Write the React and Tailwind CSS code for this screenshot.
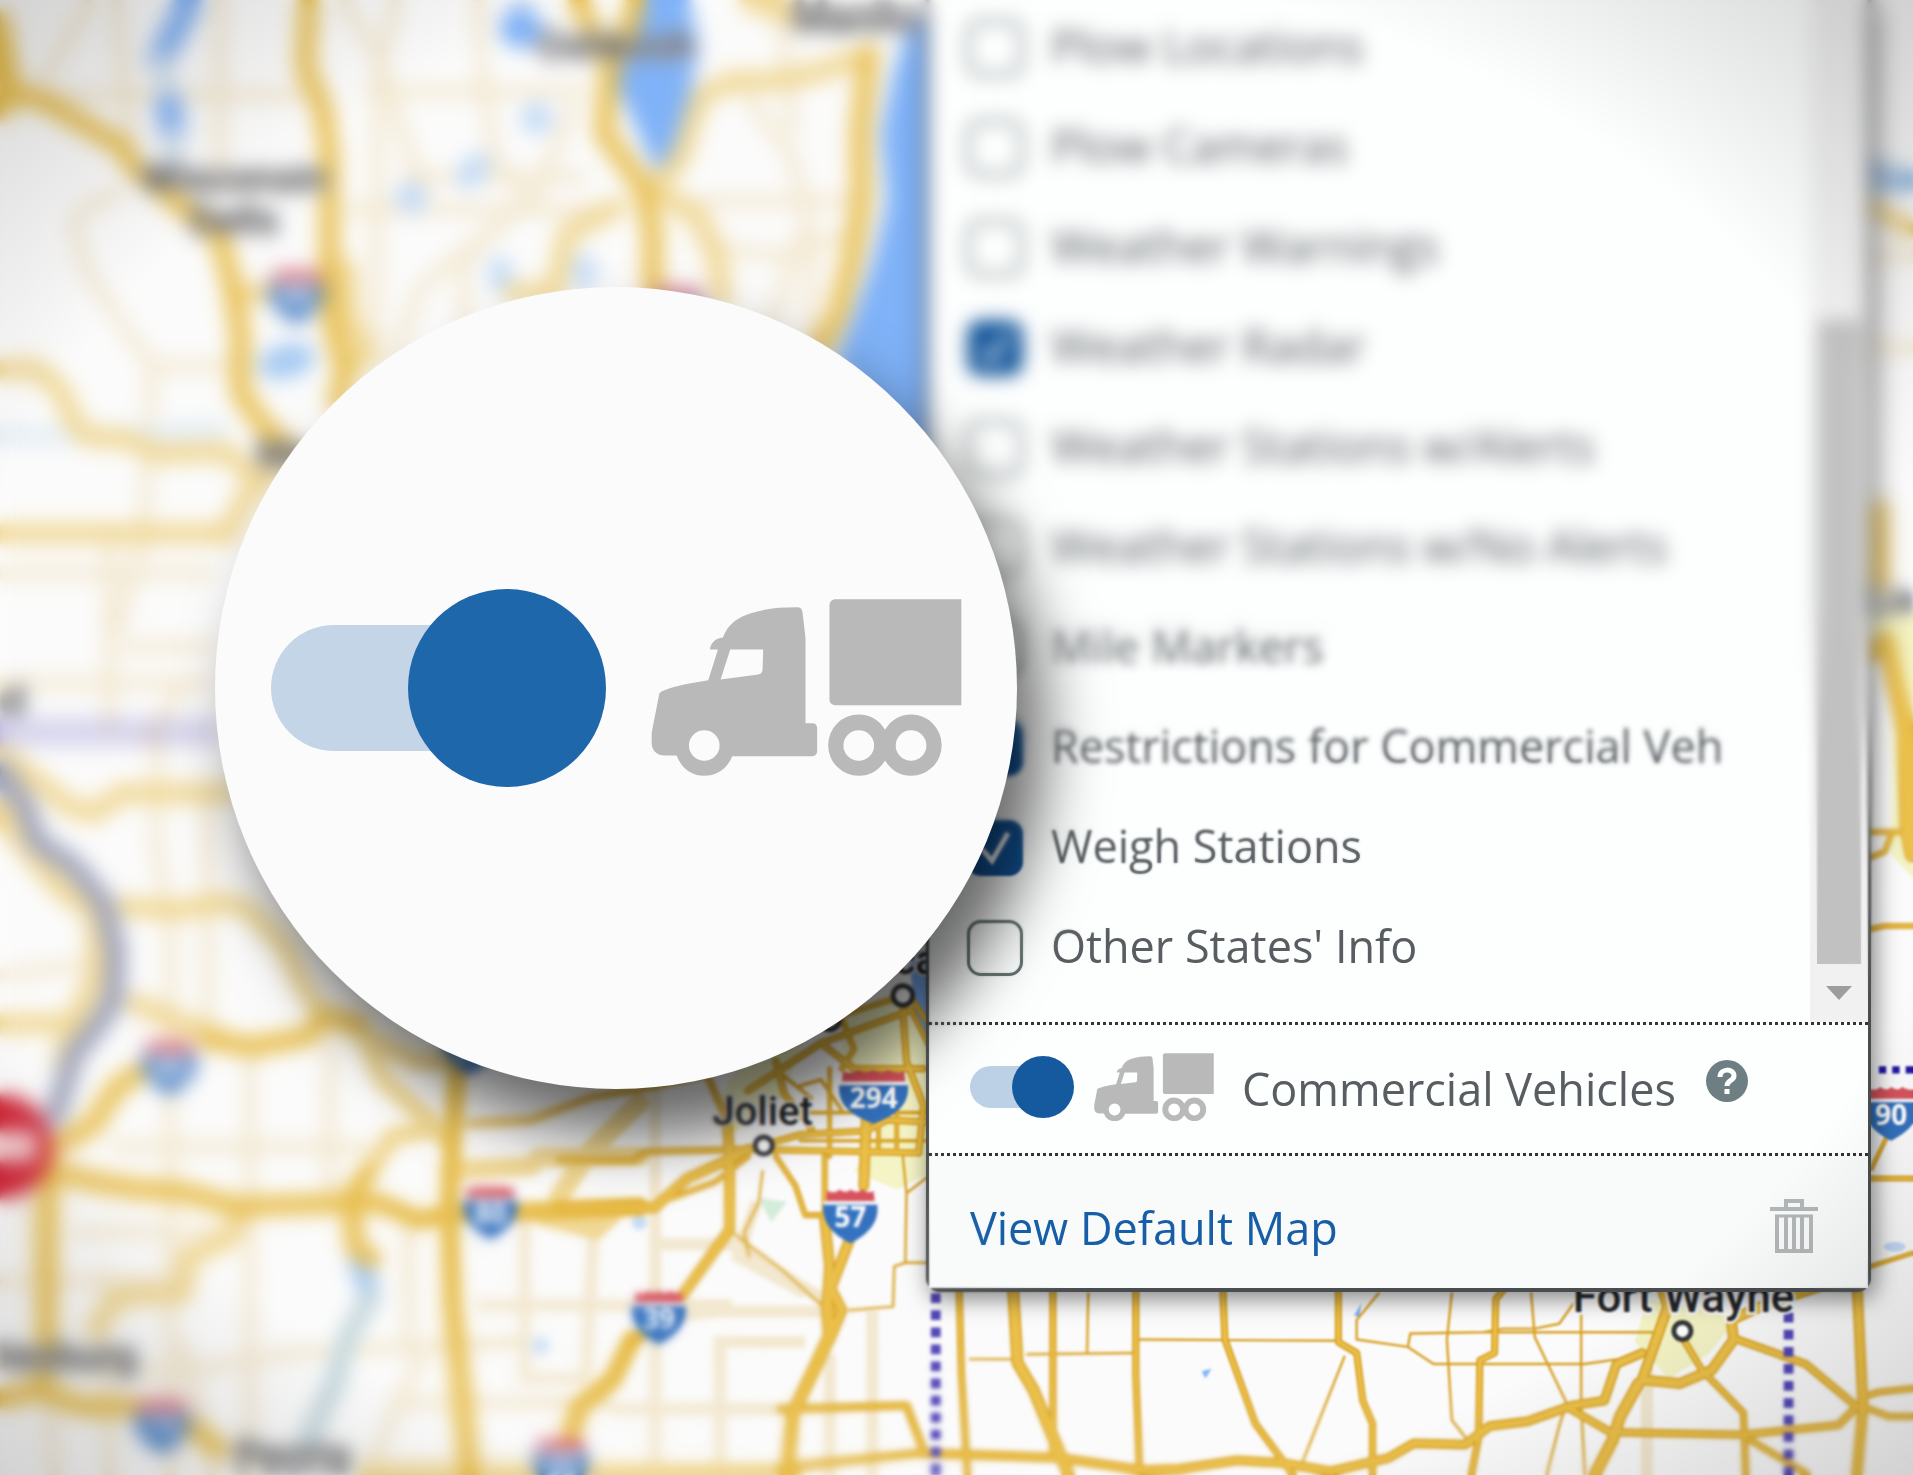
import React from "react";

const faintRoads = [
  "M75 0 L30 75", "M95 0 L108 130", "M180 0 V160", "M20 78 H250", "M280 0 L312 50 L330 110 L350 160",
  "M325 0 L310 60 L308 300", "M392 0 L396 70 L406 130 L430 160", "M300 75 H480", "M330 145 H480", "M285 172 H500",
  "M430 165 L380 215 L382 310", "M470 85 L440 160 L345 235 L320 300", "M60 180 L70 220 L110 280 L125 300 L118 440 L95 520",
  "M60 180 L78 165 L100 160", "M125 300 H190", "M555 165 H700", "M610 75 L650 130 L662 180 L655 200 L620 300", "M640 0 L650 110",
  "M665 190 V290", "M570 200 L640 210 L700 190", "M0 470 H176", "M90 440 V600", "M100 530 H176", "M0 800 L75 790", "M130 590 L128 690 L140 760 V1209",
  "M170 640 V860", "M0 560 H176", "M150 560 L120 610", "M205 860 V1209", "M270 850 V980", "M90 940 H300", "M60 1010 H180", "M85 1040 L90 1209",
  "M25 980 L45 1209", "M150 1100 L175 1209", "M60 1120 L140 1125 L250 1108 L430 1100", "M0 1050 H140", "M335 990 V1110", "M430 985 V1130 H480",
  "M487 1000 L480 1130", "M390 1070 H600", "M320 1150 H500", "M350 1100 L300 1209", "M537 870 V1209", "M540 1080 L590 1075 H690",
  "M590 1209 V1100 H660", "M715 1075 V1209", "M540 1020 H600 L680 1068", "M500 1155 H650", "M680 1110 V1209", "M620 985 L605 1030 L660 1060",
  "M1530 210 H1568", "M1530 285 H1568", "M1350 1120 V1209",
];

const midRoads = [
  "M0 303 L30 302 L50 320 L60 345 L72 358 L105 360 L130 372 L185 370 L212 395",
  "M713 44 L669 60 L636 66 L601 66 L574 79 L557 131 L541 148", "M533 153 L574 180 L587 208 L592 245",
  "M505 170 L465 191 L454 240 L420 240", "M612 0 L645 12", "M0 437 H180", "M0 617 L57 661 L77 667 L100 650 L186 650",
  "M0 661 L20 694 L50 729 L77 748 L80 798 L63 833 L50 870", "M100 743 L140 746 L187 740 L204 746 L234 776 L247 806 L264 831",
  "M0 839 L62 839 M110 822 L150 839 L180 850", "M197 995 L187 1016 L154 1030 L150 1060 L97 1063 L77 1090",
  "M368 959 L435 956 L441 949 L524 948", "M524 904 L485 942 L458 981", "M445 997 L488 1008 L502 995",
  "M294 839 L314 885 L348 915 L365 934", "M301 962 L321 932 L351 926", "M200 242 L232 236", "M284 840 L340 870 H380",
  "M240 369 L200 410 L185 440", "M283 305 L300 290 L286 260 L284 220", "M300 1207 H650",
];

const majorRoads = [
  "M0 16 L10 75 L40 85 L100 120 L112 140 L150 170 L180 195 L190 232 L197 273 L197 322 L217 350 L240 369", "M0 92 L10 75",
  "M253 0 L250 55 L265 90 L270 130 L270 230 L272 265 L283 305 L276 330", "M473 0 L500 55 L495 109 L527 153 L535 191 L535 240",
  "M522 0 L510 40 L500 55", "M712 44 L705 109 L706 164 L699 208 L686 260 L672 285",
  "M170 852 L207 858 L251 850 L267 833 L294 839", "M40 948 L38 1085 L35 1139", "M50 937 L77 921 L94 893 L112 880",
  "M50 962 L84 970 L117 975 L150 977 L194 989 L284 986 L311 986 L344 1000 L368 995 L435 993 L524 989",
  "M284 986 L301 962", "M288 989 L291 1022 L305 1032", "M375 870 L371 934 L368 989 L371 1071 L378 1139 L385 1209",
  "M468 1175 L475 1153 L502 1131 L518 1098", "M0 1147 L33 1139 L67 1153 L110 1153 L160 1172 L180 1188",
];

const nearRoads = [
  [6, "M385 921 L435 918 L485 899 L524 893 L580 880"], [6, "M459 951 L519 951 L529 944 L613 942 L753 945"],
  [9, "M459 990 L536 990 L563 966 L596 951 L613 942"], [5, "M550 982 L586 969 L613 948"],
  [9, "M596 918 L598 948 L598 1008 L559 1062 L523 1098"], [6, "M579 880 L593 912"], [5, "M636 948 L652 972 L660 996 H676"],
  [5, "M676 948 V999"], [9, "M676 999 L680 1038 L678 1068"], [11, "M678 1068 L680 1095 L666 1125 L650 1158 L645 1209"],
  [9, "M710 918 L708 972 M696 1017 L681 1056 L690 1074 L680 1098"], [7, "M640 1155 L743 1152 L757 1189"], [7, "M640 1203 L754 1191"],
  [6, "M613 894 L673 855 L747 828"], [5, "M640 860 L690 832 L745 815 L762 840"], [6, "M673 855 L700 876 H757"],
  [6, "M740 828 L743 870 L757 906 L753 945"], [5, "M747 828 L764 862 V945"], [6, "M636 870 L643 897 L665 925"],
  [6, "M613 942 L656 930 L710 927 L727 918 L764 920"], [4, "M680 876 V948"], [3, "M656 890 L673 885 L690 910 M640 880 L665 900"],
  [5, "M690 835 L700 860 L690 876"], [4, "M720 915 V945 M735 900 V945"], [3, "M656 912 H764 M656 935 H764"],
  [2, "M740 948 L743 978 L742 1035 L733 1038 L732 1071 L696 1074 M742 1035 H768 M743 978 L760 965"], [2, "M625 960 L622 985 L610 1010 L614 1030"],
  [2, "M600 1010 L640 1040 L676 1072"],
  [6, "M786 1050 L788 1126 L793 1209"], [10, "M830 1050 L834 1117 L847 1139 L876 1209"], [6, "M863 1050 L863 1191"],
  [2, "M892 1060 L891 1109 M842 1110 L930 1109 M795 1114 H830"], [6, "M931 1050 L931 1126 L934 1205"],
  [6, "M1002 1050 L1004 1098 L1029 1167 L1060 1209"], [2, "M931 1098 L1097 1099"],
  [6, "M1097 1050 L1097 1100 L1112 1109 L1117 1148 L1125 1167 L1125 1209"],
  [2, "M1130 1060 L1112 1082 L1112 1098 L1154 1104 L1175 1118 L1299 1118 L1341 1112"], [2, "M1102 1112 L1065 1205"],
  [2, "M1154 1104 L1156 1093 L1216 1092 L1232 1089 L1258 1089 L1278 1085 L1290 1068 M1216 1092 H1356"],
  [6, "M1234 1055 L1226 1065 L1225 1109 L1213 1115 L1212 1178 L1206 1209"], [2, "M1190 1060 L1186 1098 L1190 1164 L1201 1178"],
  [2, "M1255 1060 L1258 1096 L1284 1150 L1278 1169 L1268 1208"], [2, "M1296 1075 L1296 1153 L1299 1208"],
  [8, "M754 1191 L868 1195 L936 1205 L967 1204 L1014 1197 L1050 1199 L1091 1206 L1138 1195 L1159 1183 L1201 1184 L1221 1169 L1252 1165 L1289 1152 L1315 1148 L1325 1118 L1346 1109"],
  [9, "M1362 1055 L1367 1071 L1346 1131 L1377 1134 L1403 1123 L1421 1098 L1419 1082 L1445 1070 L1490 1055"],
  [10, "M1343 1134 L1328 1161 L1322 1180 L1307 1209"], [7, "M1284 1153 L1320 1174 L1429 1176 L1507 1168 L1522 1153 L1480 1118 L1424 1098"],
  [6, "M1380 1098 L1395 1123 L1429 1158 L1431 1209 M1434 1180 L1481 1208"], [9, "M1522 1050 L1527 1153 L1522 1209"],
  [6, "M1527 1145 L1540 1141 L1568 1138 M1527 1153 L1548 1161 L1568 1161"], [4, "M1533 1038 L1568 1027"],
  [8, "M1528 165 L1568 190"], [12, "M1541 416 V480"], [14, "M1528 540 L1546 524 L1562 601 L1564 678 L1568 700"],
  [5, "M1530 682 H1568 M1530 704 L1545 698 L1550 684 M1530 762 L1545 759 H1568 M1530 966 H1568"], [4, "M1534 958 L1546 933"],
];

const shields = [
  [243, 242, "90"], [139, 874, "80"], [402, 993, "80"], [540, 1079, "39"], [133, 1168, "74"], [460, 1200, "55"],
  [555, 257, "43"], [385, 858, "39"], [697, 996, "57"], [1550, 912, "90"],
];

function Shield({ x, y, label, half = 22 }) {
  const w = half;
  return (
    <g transform={`translate(${x} ${y})`}>
      <path d={`M${-w + 3} -20 q7 3 ${w * 0.45} -1 q6 4 ${w - 3 - w * 0.45} 0 q6 4 ${w - 3 - w * 0.45} 0 q7 4 ${w * 0.45} 1 l1 9 h${-2 * w + 4} z`} fill="#d8535d" />
      <path d={`M${-w} -9 H${w} C${w + 2} 6 ${w - 8} 16 0 23 C${-w + 8} 16 ${-w - 2} 6 ${-w} -9 Z`} fill="#3572bf" />
      <path d={`M${-w} -10 H${w}`} stroke="#f4f6fa" strokeWidth="3" />
      <text x="0" y="10" textAnchor="middle" className="font-['Open_Sans',sans-serif] text-[23px] font-bold" fill="#fff">{label}</text>
    </g>
  );
}

function Town({ x, y, anchor = "middle", children }) {
  return (
    <text x={x} y={y} textAnchor={anchor} stroke="#fff" strokeWidth="3" paintOrder="stroke" fill="#1f2124" className="text-[33px] font-medium">
      {children}
    </text>
  );
}

function RoadMap() {
  return (
    <svg className="absolute inset-0 h-full w-full font-['Roboto',sans-serif]" viewBox="0 0 1568 1209" preserveAspectRatio="xMidYMid slice" aria-label="Road map" role="img">
      <rect width="1568" height="1209" fill="#fbfbfb" />
      <g fill="#f4f4c6">
        <path d="M690 830 L765 800 V960 L735 975 L700 960 L720 930 L690 905 Z" />
        <path d="M620 850 L660 850 L640 900 L600 930 L590 900 Z" />
        <path d="M1350 1065 L1425 1080 L1400 1110 L1368 1130 L1340 1100 Z" />
        <path d="M1530 500 H1568 V720 L1550 700 L1552 560 Z" />
      </g>
      <path d="M622 982 L645 985 L632 1002 Z" fill="#d5ecd9" />
      <g fill="none" stroke="#f3e8d0" strokeWidth="10">
        {faintRoads.map((d) => <path key={d} d={d} />)}
      </g>
      <g fill="#7fb2f8">
        <path d="M765 8 L742 30 L732 60 L722 109 L727 165 L715 215 L698 262 L685 295 L765 420 Z" />
        <path d="M525 0 L565 0 L573 40 L564 85 L554 115 L541 148 L526 115 L508 75 L500 50 Z" />
        <path d="M745 780 H765 V860 L750 835 Z" />
        <circle cx="427" cy="23" r="17" />
        <path d="M985 1124 L993 1122 L988 1130 Z M1110 1078 L1116 1068 L1114 1080 Z" />
      </g>
      <g fill="#c3dbf7">
        <circle cx="440" cy="97" r="13" /><ellipse cx="388" cy="140" rx="11" ry="17" transform="rotate(40 388 140)" />
        <circle cx="337" cy="162" r="13" /><ellipse cx="479" cy="223" rx="10" ry="15" /><ellipse cx="410" cy="225" rx="10" ry="15" />
        <ellipse cx="235" cy="296" rx="24" ry="14" transform="rotate(-15 235 296)" fill="#a5c9f2" />
        <circle cx="524" cy="1002" r="6" /><circle cx="443" cy="1103" r="7" /><ellipse cx="1553" cy="1022" rx="9" ry="4" />
      </g>
      <g fill="none" strokeLinecap="round" strokeLinejoin="round">
        <path d="M158 -5 L145 22 L131 48 M138 82 L141 108" stroke="#86b4f5" strokeWidth="22" />
        <path d="M131 48 L138 75 M141 110 L143 140" stroke="#cfdfee" strokeWidth="14" />
        <path d="M294 1033 L304 1062" stroke="#9fc5f2" strokeWidth="17" />
        <path d="M304 1062 L284 1098 L274 1135 L252 1180" stroke="#c3d6dc" strokeWidth="16" />
        <path d="M0 357 H90 L180 352" stroke="#e6eef5" strokeWidth="16" />
        <g stroke="#f0d793" strokeWidth="16">{midRoads.map((d) => <path key={d} d={d} />)}</g>
        <g stroke="#e8bf50" strokeWidth="16">{majorRoads.map((d) => <path key={d} d={d} />)}</g>
        <g stroke="#d8a225">{nearRoads.map(([w, d]) => <path key={d} d={d} strokeWidth={w} />)}</g>
        <g stroke="#ebc04a">{nearRoads.filter(([w]) => w > 3).map(([w, d]) => <path key={d} d={d} strokeWidth={w - 3} />)}</g>
        <path d="M0 630 L20 660 L30 690 L60 710 L85 740 L95 780 L93 820 L80 840 L60 865 L45 915" stroke="#b7c1e6" strokeWidth="19" />
        <path d="M0 630 L20 660 L30 690 L60 710 L85 740 L95 780 L93 820 L80 840 L60 865 L45 915" stroke="#85807e" strokeWidth="14" strokeLinecap="butt" strokeDasharray="6 6" />
      </g>
      <g fill="none" stroke="#5247b8">
        <path d="M0 600 H180" strokeWidth="24" strokeDasharray="7 7" strokeOpacity="0.42" />
        <path d="M767 1060 V1209 M1466 1076 V1209" strokeWidth="8" strokeDasharray="8 6" />
        <path d="M1540 877 H1568" strokeWidth="6" strokeDasharray="6 5" stroke="#2416a8" />
      </g>
      <Town x={505} y={48}>Oshkosh</Town>
      <Town x={650} y={26} anchor="start">Manito</Town>
      <Town x={192} y={157}>Wisconsin</Town>
      <Town x={192} y={192}>Dells</Town>
      <Town x={274} y={384}>Madison</Town>
      <Town x={2} y={585} anchor="start">d</Town>
      <Town x={2} y={1123} anchor="start">lesburg</Town>
      <Town x={240} y={1204}>Peoria</Town>
      <Town x={625} y={922}>Joliet</Town>
      <Town x={768} y={798} anchor="end">Chica</Town>
      <text x="1380" y="1075" textAnchor="middle" stroke="#fff" strokeWidth="4" paintOrder="stroke" fill="#26282b" className="text-[36px] font-medium">Fort Wayne</text>
      <Town x={1530} y={502} anchor="start">La</Town>
      <text x="1530" y="156" className="text-[32px] font-medium" fill="#2f78c4">Sa</text>
      {shields.map(([x, y, label]) => <Shield key={`${x}-${y}`} x={x} y={y} label={label} />)}
      <Shield x={716} y={898} label="294" half={28} />
      <g fill="#fff" stroke="#36383b" strokeWidth="4">
        <circle cx="740" cy="816" r="8" /><circle cx="680" cy="836" r="8" /><circle cx="626" cy="939" r="7" /><circle cx="1379" cy="1091" r="7" />
      </g>
      <circle cx="0" cy="940" r="43" fill="#d1283a" />
      <rect x="-30" y="927" width="60" height="25" fill="#f3cfd2" />
    </svg>
  );
}

function Truck({ className }) {
  return (
    <svg className={className} viewBox="30 118 934 532" fill="#b9b9b9" aria-hidden="true">
      <path fillRule="evenodd" d="M55 402 C58 396 64 394 72 391 C110 377 155 370 202 362 L231 270 H207 C209 250 224 236 246 234 C262 190 295 172 330 161 C375 146 420 143 468 143 C479 143 484 149 485 158 L494 235 V491 H514 C524 491 529 497 529 506 V573 C529 583 524 590 514 590 H274 C258 628 228 649 190 649 C152 649 122 628 107 588 H70 C46 588 32 572 32 550 V520 Z M268 270 L239 360 L352 345 C361 343 365 338 365 330 L367 270 Z M190 512 A46 46 0 1 0 190 604 A46 46 0 1 0 190 512 Z" />
      <path d="M585 119 H962 V437 H585 C573 437 566 430 566 419 V138 C566 127 573 119 585 119 Z" />
      <path fillRule="evenodd" d="M733 511 C716 482 688 465 654 465 A92 92 0 1 0 654 649 C688 649 716 632 733 603 C750 632 778 649 811 649 A92 92 0 1 0 811 465 C778 465 750 482 733 511 Z M654 512 A46 46 0 1 1 654 604 A46 46 0 1 1 654 512 Z M811 512 A46 46 0 1 1 811 604 A46 46 0 1 1 811 512 Z" />
    </svg>
  );
}

const layers = [
  { name: "Plow Locations", on: false },
  { name: "Plow Cameras", on: false },
  { name: "Weather Warnings", on: false },
  { name: "Weather Radar", on: true },
  { name: "Weather Stations w/Alerts", on: false },
  { name: "Weather Stations w/No Alerts", on: false },
  { name: "Mile Markers", on: false },
  { name: "Restrictions for Commercial Veh", on: true },
  { name: "Weigh Stations", on: true },
  { name: "Other States' Info", on: false },
];

function LayerRow({ name, on }) {
  return (
    <label className="flex h-[100px] items-center gap-[28px] pb-1 whitespace-nowrap">
      <span className="grid size-[56px] shrink-0 place-items-center">
        <input type="checkbox" defaultChecked={on} className="peer col-start-1 row-start-1 size-full appearance-none rounded-[14px] border-[3px] border-[#5d6b6b] bg-transparent checked:border-[#12559a] checked:bg-[#12559a]" />
        <svg className="pointer-events-none invisible col-start-1 row-start-1 size-[44px] peer-checked:visible" viewBox="0 0 44 44" fill="none" stroke="#fff" strokeWidth="5" aria-hidden="true">
          <path d="M9 23 L19 35 L35 7" />
        </svg>
      </span>
      <span className="pb-1">{name}</span>
    </label>
  );
}

export default function App() {
  return (
    <main className="relative min-h-screen overflow-hidden bg-[#fbfbfb] font-['Open_Sans','Noto_Sans',sans-serif] text-[45px] leading-[60px] text-[#575d61]">
      <RoadMap />
      <div className="pointer-events-none absolute inset-0 backdrop-blur-[1px]" />
      <div className="pointer-events-none absolute inset-0 backdrop-blur-[5px] [mask-image:radial-gradient(ellipse_32%_21%_at_75%_76%,transparent_165%,black_230%)]" />

      <section aria-label="Map layers" className="relative ml-[48.4%] w-[49.4%] rounded-b-[14px] border-x-[3px] border-b-[4px] border-[#4a4d4f] bg-[#fdfefe] shadow-[4px_6px_24px_rgba(0,0,0,0.5)]">
        <div className="flex">
          <div className="min-w-0 flex-1 overflow-hidden pb-[22px] pl-[38px]">
            {layers.map((l) => <LayerRow key={l.name} {...l} />)}
          </div>
          <div className="flex w-[58px] shrink-0 flex-col items-center bg-[#f1f1f1] pt-[320px]">
            <div className="w-[44px] flex-1 bg-[#c1c1c1]" />
            <button type="button" aria-label="Scroll down" className="flex h-[58px] w-full items-center justify-center">
              <svg width="26" height="14" viewBox="0 0 26 14" fill="#9d9d9d" aria-hidden="true"><path d="M0 0 H26 L13 14 Z" /></svg>
            </button>
          </div>
        </div>

        <div className="flex h-[134px] items-center border-y-[3px] border-dotted border-[#333] pb-1 pl-[41px]">
          <button type="button" role="switch" aria-checked="true" aria-label="Commercial Vehicles" className="flex h-[42px] w-[104px] items-center justify-end rounded-full bg-linear-to-r from-[#bdd1e6] from-75% to-transparent to-75%">
            <span className="size-[62px] shrink-0 rounded-full bg-[#155a9f]" />
          </button>
          <Truck className="ml-[20px] w-[120px]" />
          <span className="ml-[28px] pt-1 whitespace-nowrap">Commercial Vehicles</span>
          <button type="button" aria-label="Help" className="mb-[12px] ml-[30px] grid size-[42px] place-items-center rounded-full bg-[#6d7f82]">
            <svg className="size-[32px]" viewBox="0 0 32 32" fill="none" stroke="#fff" strokeWidth="5" aria-hidden="true">
              <path d="M9 12 C9 3 23 3 23 11 C23 16 16 15 16 21" /><path d="M16 24 V29" />
            </svg>
          </button>
        </div>

        <div className="flex h-[132px] items-center justify-between bg-[#f9fbfb] pt-2 pr-[50px] pl-[41px]">
          <a href="#default" className="pt-1 text-[#175ea6]">View Default Map</a>
          <button type="button" aria-label="Delete">
            <svg width="48" height="54" viewBox="0 0 48 54" fill="none" stroke="#b4b7b8" strokeWidth="4" aria-hidden="true">
              <path d="M0 10 H48 M16 9 V2 H32 V9" /><path d="M7 16 V52 H41 V16 M16 16 V52 M24 16 V52 M32 16 V52" /><path d="M5 17 H43" strokeWidth="3" />
            </svg>
          </button>
        </div>
      </section>

      <div className="pointer-events-none absolute inset-0 backdrop-blur-[1px] [mask-image:radial-gradient(ellipse_32%_21%_at_75%_76%,transparent_80%,black_100%)]" />
      <div className="pointer-events-none absolute inset-0 backdrop-blur-[2px] [mask-image:radial-gradient(ellipse_32%_21%_at_75%_76%,transparent_105%,black_125%)]" />
      <div className="pointer-events-none absolute inset-0 backdrop-blur-[4px] [mask-image:radial-gradient(ellipse_32%_21%_at_75%_76%,transparent_130%,black_150%)]" />
      <div className="pointer-events-none absolute inset-0 backdrop-blur-[8px] [mask-image:radial-gradient(ellipse_32%_21%_at_75%_76%,transparent_150%,black_180%)]" />
      <div className="pointer-events-none absolute inset-0 bg-[radial-gradient(ellipse_75%_75%_at_50%_50%,transparent_70%,rgba(0,0,0,0.2)_100%)]" />

      <div className="absolute top-[287px] left-[215px] flex size-[802px] items-center justify-center gap-[45px] rounded-full bg-[#fbfbfb] shadow-[26px_48px_64px_rgba(0,0,0,0.6)]">
        <button type="button" role="switch" aria-checked="true" aria-label="Commercial vehicle mode" className="flex h-[126px] w-[335px] items-center justify-end rounded-full bg-linear-to-r from-[#c4d5e7] from-70% to-transparent to-70%">
          <span className="size-[198px] shrink-0 rounded-full bg-[#1d67aa]" />
        </button>
        <Truck className="w-[311px]" />
      </div>
    </main>
  );
}
